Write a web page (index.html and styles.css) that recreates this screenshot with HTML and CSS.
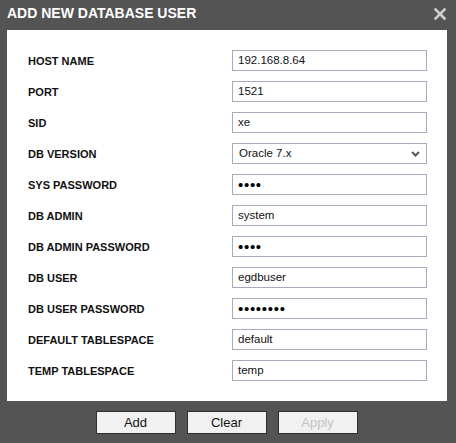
FILE: index.html
```html
<!DOCTYPE html>
<html>
<head>
<meta charset="utf-8">
<link rel="stylesheet" href="styles.css">
</head>
<body>
<div class="dialog">
  <div class="header">
    <span class="title">ADD NEW DATABASE USER</span>
    <svg class="close" width="12" height="12" viewBox="0 0 12 12"><path d="M1.5 1.5 L10.5 10.5 M10.5 1.5 L1.5 10.5" stroke="#cfcfcf" stroke-width="2.6" stroke-linecap="square"/></svg>
  </div>
  <div class="panel">
    <div class="row"><label class="lbl">HOST NAME</label><div class="field">192.168.8.64</div></div>
    <div class="row"><label class="lbl">PORT</label><div class="field">1521</div></div>
    <div class="row"><label class="lbl">SID</label><div class="field">xe</div></div>
    <div class="row"><label class="lbl">DB VERSION</label><div class="field select"><span class="sel-text">Oracle 7.x</span><svg class="chev" width="9" height="6" viewBox="0 0 9 6"><path d="M1 1 L4.5 4.5 L8 1" fill="none" stroke="#555" stroke-width="2"/></svg></div></div>
    <div class="row"><label class="lbl">SYS PASSWORD</label><div class="field pw">••••</div></div>
    <div class="row"><label class="lbl">DB ADMIN</label><div class="field">system</div></div>
    <div class="row"><label class="lbl">DB ADMIN PASSWORD</label><div class="field pw">••••</div></div>
    <div class="row"><label class="lbl">DB USER</label><div class="field">egdbuser</div></div>
    <div class="row"><label class="lbl">DB USER PASSWORD</label><div class="field pw">••••••••</div></div>
    <div class="row"><label class="lbl">DEFAULT TABLESPACE</label><div class="field">default</div></div>
    <div class="row"><label class="lbl">TEMP TABLESPACE</label><div class="field">temp</div></div>
  </div>
  <div class="buttons">
    <div class="btn">Add</div>
    <div class="btn">Clear</div>
    <div class="btn disabled">Apply</div>
  </div>
</div>
</body>
</html>
```
FILE: styles.css
```css
html, body {
  margin: 0;
  padding: 0;
  background: #545454;
  width: 456px;
  height: 443px;
  overflow: hidden;
  font-family: "Liberation Sans", Arial, sans-serif;
}
.dialog {
  width: 456px;
}
.header {
  height: 30px;
  display: flex;
  justify-content: space-between;
  align-items: flex-start;
  padding: 0 10px 0 7px;
  box-sizing: border-box;
}
.title {
  color: #ffffff;
  font-weight: bold;
  font-size: 14px;
  line-height: 26px;
}
.close {
  margin-top: 8px;
}
.panel {
  background: #ffffff;
  margin: 0 9px 0 7px;
  padding: 20px 20px 20px 21px;
  display: flex;
  flex-direction: column;
  gap: 10px;
}
.row {
  display: flex;
  align-items: center;
  height: 21px;
}
.lbl {
  width: 204px;
  font-size: 11px;
  font-weight: bold;
  color: #111;
}
.field {
  width: 195px;
  height: 21px;
  box-sizing: border-box;
  border: 1px solid #a9a9bb;
  padding: 0 5px;
  font-size: 11.5px;
  line-height: 19px;
  color: #111;
  display: flex;
  align-items: center;
}
.pw {
  font-size: 15px;
  letter-spacing: 0.7px;
  color: #000;
}
.select {
  justify-content: space-between;
  padding: 0 6px 0 6px;
}
.chev {
  margin-top: 1px;
}
.buttons {
  display: flex;
  justify-content: center;
  gap: 11px;
  margin-top: 10px;
  padding-right: 3px;
}
.btn {
  width: 80px;
  height: 23px;
  box-sizing: border-box;
  border: 1px solid #2e2e2e;
  background: #f1f1f1;
  font-size: 13px;
  color: #111;
  text-align: center;
  line-height: 21px;
}
.btn.disabled {
  color: #c4c4c4;
}
```
